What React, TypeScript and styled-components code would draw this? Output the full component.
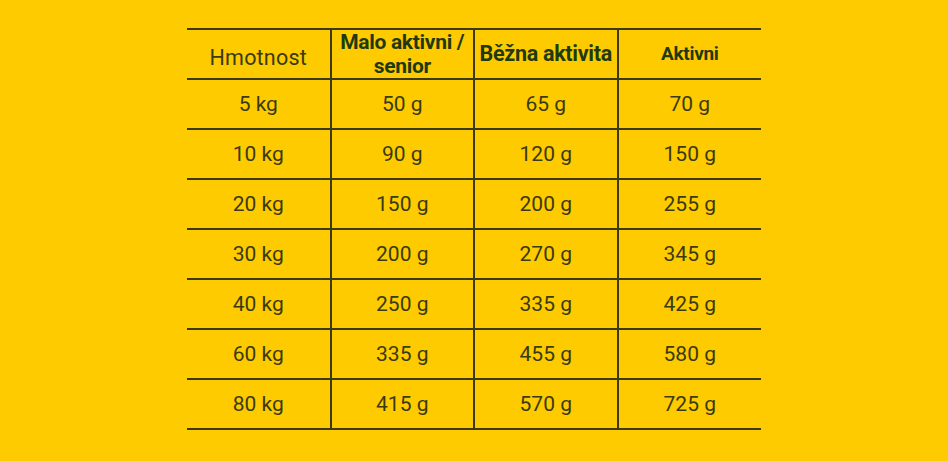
import styled, { createGlobalStyle } from 'styled-components';

const GlobalStyle = createGlobalStyle`
  html, body {
    margin: 0;
    padding: 0;
    background: #fecb00;
  }
  body {
    font-family: Roboto, "Liberation Sans", Arial, sans-serif;
  }
`;

interface Row {
  weight: string;
  low: string;
  normal: string;
  active: string;
}

const rows: Row[] = [
  { weight: '5 kg', low: '50 g', normal: '65 g', active: '70 g' },
  { weight: '10 kg', low: '90 g', normal: '120 g', active: '150 g' },
  { weight: '20 kg', low: '150 g', normal: '200 g', active: '255 g' },
  { weight: '30 kg', low: '200 g', normal: '270 g', active: '345 g' },
  { weight: '40 kg', low: '250 g', normal: '335 g', active: '425 g' },
  { weight: '60 kg', low: '335 g', normal: '455 g', active: '580 g' },
  { weight: '80 kg', low: '415 g', normal: '570 g', active: '725 g' },
];

const Page = styled.div`
  width: 948px;
  height: 461px;
  display: flex;
  justify-content: center;
  padding-top: 28px;
  box-sizing: border-box;
  background: #fecb00;
`;

const Table = styled.table`
  border-collapse: collapse;
  width: 574px;
  height: 402px;
  table-layout: fixed;
  align-self: flex-start;
`;

const Cell = styled.td`
  height: 48px;
  padding: 0;
  text-align: center;
  vertical-align: middle;
  border-top: 2px solid #3b3a14;
  border-bottom: 2px solid #3b3a14;
  font-size: 21px;
  color: #3a3a12;
  & + & {
    border-left: 2px solid #3b3a14;
  }
`;

const HeadCell = styled(Cell).attrs({ as: 'th' })<{ $bold?: boolean; $size?: number }>`
  font-weight: ${(p) => (p.$bold ? 700 : 400)};
  font-size: ${(p) => p.$size ?? 21}px;
  line-height: 24px;
  color: ${(p) => (p.$bold ? '#1f3a10' : '#3a3a12')};
  letter-spacing: ${(p) => (p.$bold ? '-0.3px' : '0.2px')};
  white-space: nowrap;
  & + & {
    border-left: 2px solid #3b3a14;
  }
`;

const Shifted = styled.span<{ $dy: number }>`
  display: inline-block;
  transform: translateY(${(p) => p.$dy}px);
`;

export default function App() {
  return (
    <>
      <GlobalStyle />
      <Page>
        <Table>
          <thead>
            <tr>
              <HeadCell $size={21.5}>
                <Shifted $dy={4}>Hmotnost</Shifted>
              </HeadCell>
              <HeadCell $bold>
                Malo aktivni /<br />
                senior
              </HeadCell>
              <HeadCell $bold $size={21.5}>Běžna aktivita</HeadCell>
              <HeadCell $bold $size={19}>Aktivni</HeadCell>
            </tr>
          </thead>
          <tbody>
            {rows.map((r) => (
              <tr key={r.weight}>
                <Cell>{r.weight}</Cell>
                <Cell>{r.low}</Cell>
                <Cell>{r.normal}</Cell>
                <Cell>{r.active}</Cell>
              </tr>
            ))}
          </tbody>
        </Table>
      </Page>
    </>
  );
}
